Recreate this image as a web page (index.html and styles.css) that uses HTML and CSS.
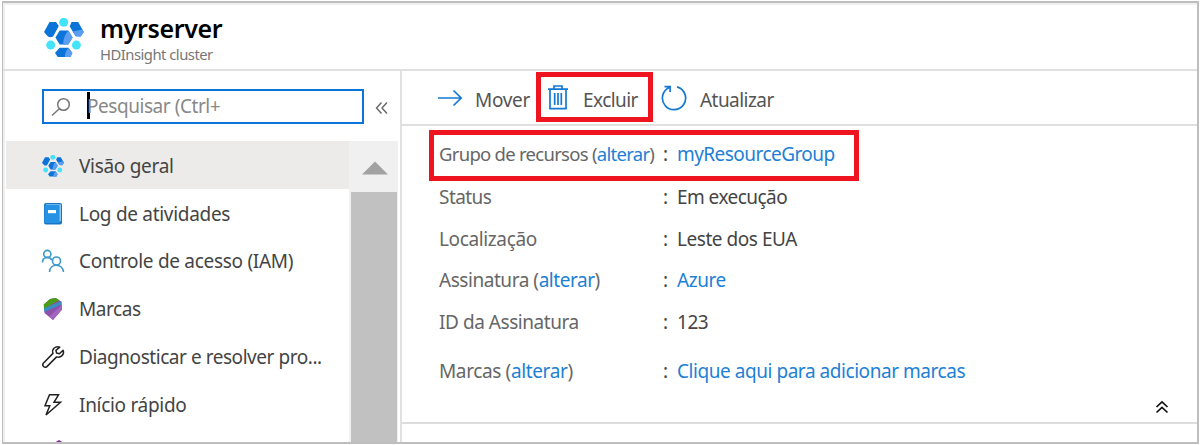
FILE: index.html
```html
<!DOCTYPE html>
<html lang="pt">
<head>
<meta charset="utf-8">
<title>myrserver</title>
<link rel="stylesheet" href="styles.css">
</head>
<body>
<svg width="0" height="0" class="defs">
  <symbol id="cluster" viewBox="0 0 40 40">
    <path fill="#0a74d8" d="M5.500 4h6.500l2.800 4-5.400 10c-1.300 1.500-4 1.400-5.500.5L0 14zM27.500 4h6.700L39.800 14l-3.100 4.500-5-.2-6-9.800zM15.700 12.500h8.600l4.300 7-4.300 7h-8.600l-4.300-7zM15.500 29.700h9l3.900 5.400-2 3.900H13.800l-2.800-3.900z"/>
    <path fill="#5c9df2" d="M28.500 13.500L38.500 11.500 39.800 14l-3.100 4.500-5-.2zM24.300 12.700L28.600 19.500 24.300 26.500h-5c0-5 1-9.500 5-13.800zM24.500 29.700l3.900 5.400-2 3.900h-5.500c0-3.500 1-6.500 3.600-9.300z"/>
    <circle cx="19.700" cy="4.300" r="4.500" fill="#45e3fb"/><circle cx="6.700" cy="27.100" r="4.500" fill="#45e3fb"/><circle cx="32.400" cy="27.100" r="4.500" fill="#45e3fb"/>
  </symbol>
</svg>
<div class="window">
  <header class="header">
    <svg class="logo" viewBox="0 0 40 40"><use href="#cluster"/></svg>
    <div><h1 class="title">myrserver</h1><p class="subtitle">HDInsight cluster</p></div>
  </header>
  <div class="body">
    <aside class="sidebar">
      <div class="search-row">
        <div class="search">
          <svg width="20" height="20" viewBox="0 0 20 20" fill="none" stroke="#777" stroke-width="1.500"><circle cx="12.500" cy="7.500" r="5.800"/><path d="M8.300 11.700L1 18.500"/></svg>
          <span class="caret"></span><span class="placeholder">Pesquisar (Ctrl+</span>
        </div>
        <svg class="collapse" width="14" height="14" viewBox="0 0 14 14" fill="none" stroke="#666" stroke-width="1.400"><path d="M6.500 1.500L1.500 7l5 5.500M12 1.500L7 7l5 5.500"/></svg>
      </div>
      <div class="menu">
        <nav class="nav">
          <a class="item active"><svg class="icon" viewBox="0 0 40 40"><use href="#cluster"/></svg><span class="n1">Visão geral</span></a>
          <a class="item"><svg class="icon" viewBox="0 0 22 22"><rect x="2" y="0" width="18" height="21.500" rx="2" fill="#1a76c2"/><path d="M4 1.200h15v17H3z" fill="#8dcaf3"/><path d="M4 2h13.500v18H4a1.500 1.500 0 0 1-1.500-1.500V3z" fill="#2592e4"/><rect x="6" y="7" width="8" height="3.200" fill="#fff"/></svg><span class="n2">Log de atividades</span></a>
          <a class="item"><svg class="icon" viewBox="0 0 22 22" fill="none" stroke="#3999ca" stroke-width="1.600"><circle cx="5.300" cy="4" r="3.600"/><circle cx="14.500" cy="11" r="4"/><path d="M.5 12.500c0-6 7-6.500 9.300-2.500M7.500 22c.5-9 13-9 14 0"/></svg><span class="n3">Controle de acesso (IAM)</span></a>
          <a class="item"><svg class="icon" viewBox="0 0 22 22"><path d="M1.800 6.500L8 1l5-1 6.500 3.500.5 8L11 22l-8.500-7z" fill="#8d50ab"/><path d="M2 10L19 3.500l.3 3L2.300 14z" fill="#398fc0"/><path d="M1.800 6.500L8 1l6-1 3.500 2.300L2 10.500z" fill="#4b9c16"/><path d="M7 18.500L19.700 7.500l.3 4L11 22z" fill="#a365bd"/></svg><span class="n4">Marcas</span></a>
          <a class="item"><svg class="icon" viewBox="0 0 22 22" fill="none" stroke="#222" stroke-width="1.500" stroke-linejoin="round"><path d="M17.800 1.200c-4.300-1.700-8.300 1.800-6.800 6.200L1.300 17.200c-1.800 2.500 1.300 5.200 3.600 3.400l9.700-9.700c4.200 1.400 8.200-2.500 6.500-6.700l-3.700 3.600-2.800-.7-.7-2.800z"/></svg><span class="n5">Diagnosticar e resolver pro...</span></a>
          <a class="item"><svg class="icon" viewBox="0 0 22 22" fill="none" stroke="#222" stroke-width="1.500"><path d="M7.500.8h9l-4.500 7.500h6.500L4 21l3.800-9.200H3z"/></svg><span class="n6">Início rápido</span></a>
          <a class="item last"><svg width="22" height="22" viewBox="0 0 22 22"><path d="M11 0l8 5v10l-8 5-8-5V5z" fill="#7b2b9b"/></svg></a>
        </nav>
        <div class="scrollbar"><div class="up"><svg width="26" height="14" viewBox="0 0 26 14"><path d="M0 13.500L13 .5l13 13z" fill="#a2a2a2"/></svg></div><div class="thumb"></div></div>
      </div>
    </aside>
    <main class="main">
      <div class="toolbar">
        <div class="tool move"><svg width="25" height="20" viewBox="0 0 25 20" fill="none" stroke="#1479d3" stroke-width="1.700"><path d="M0 10h23M15.500 2.500L23.200 10l-7.700 7.500"/></svg><span class="b1">Mover</span></div>
        <div class="tool delete"><svg width="20" height="25" viewBox="0 0 20 25" fill="none" stroke="#1479d3" stroke-width="1.700"><path d="M0 4.200h20M6 4V1h8v3M2 4.500v19.200h16V4.500M6.700 8v12M10 8v12M13.300 8v12"/></svg><span class="b2">Excluir</span></div>
        <div class="tool refresh"><svg width="26" height="26" viewBox="0 0 26 26" fill="none" stroke="#1479d3" stroke-width="1.700"><path d="M8.300 2.500A11.600 11.600 0 1 0 16 1.900M3.500 1.600h5.600v5.500"/></svg><span class="b3">Atualizar</span></div>
      </div>
      <div class="details">
        <div class="row group"><span class="label"><span class="l1">Grupo de recursos (<a>alterar</a>)</span></span><i>:</i><a class="v1">myResourceGroup</a></div>
        <div class="row"><span class="label"><span class="l2">Status</span></span><i>:</i><span class="v2">Em execução</span></div>
        <div class="row"><span class="label"><span class="l3">Localização</span></span><i>:</i><span class="v3">Leste dos EUA</span></div>
        <div class="row"><span class="label"><span class="l4">Assinatura (<a>alterar</a>)</span></span><i>:</i><a class="v4">Azure</a></div>
        <div class="row"><span class="label"><span class="l5">ID da Assinatura</span></span><i>:</i><span class="v5">123</span></div>
        <div class="row tags"><span class="label"><span class="l6">Marcas (<a>alterar</a>)</span></span><i>:</i><a class="v6">Clique aqui para adicionar marcas</a></div>
        <div class="fold"><svg width="14" height="14" viewBox="0 0 14 14" fill="none" stroke="#111" stroke-width="1.700"><path d="M1.500 7L7 1.800 12.500 7M1.500 12.500L7 7.300l5.500 5.200"/></svg></div>
      </div>
    </main>
  </div>
</div>
</body>
</html>
```
FILE: styles.css
```css
* { box-sizing: border-box; }
body { margin: 0; height: 445px; padding: 1px 1px 1px 2px; overflow: hidden; background: #fff; font: 19px/24px "Noto Sans", "Open Sans", sans-serif; color: #444; }
.defs { position: absolute; }
.window { height: 443px; border: 2px solid #bebebe; border-left-width: 1px; display: flex; flex-direction: column; overflow: hidden; box-shadow: inset 2px 2px #f0f0f0; }
.header { height: 68px; flex: none; border-bottom: 2px solid #e0e0e0; display: flex; gap: 16px; padding: 15px 0 0 41px; }
.logo { width: 40px; height: 40px; flex: none; }
.title { margin: -3px 0 0; font-size: 25px; line-height: 26px; font-weight: 600; color: #000; letter-spacing: -.35px; }
.subtitle { margin: 4px 0 0; font-size: 14.800px; line-height: 18px; color: #777; letter-spacing: -.5px; }
.title, .subtitle, .item span, .placeholder, .tool span, .label span, .row > a, .row > span { white-space: nowrap; }
.body { flex: 1; min-height: 0; display: flex; }
.sidebar { width: 399px; flex: none; border-right: 2px solid #e0e0e0; display: flex; flex-direction: column; padding-left: 3px; }
.search-row { height: 70px; flex: none; padding: 18px 0 0 36px; display: flex; gap: 11px; }
.search { width: 322px; height: 35px; border: 2px solid #0a74d8; display: flex; align-items: center; padding-left: 7px; }
.caret { width: 3px; height: 27px; margin-left: 16px; margin-top: -2px; background: #000; }
.placeholder { color: #888; margin-left: -3px; margin-top: -2px; letter-spacing: -.45px; }
.collapse { margin-top: 12px; }
.menu { display: flex; flex: 1; min-height: 0; overflow: hidden; }
.nav { width: 343px; flex: none; }
.item { display: flex; height: 47.800px; align-items: center; padding: 2px 0 0 36px; gap: 15px; }
.active { background: #edebe9; }
.icon { width: 22px; height: 22px; flex: none; overflow: visible; }
.last { padding: 12px 0 0 42px; align-items: flex-start; }
.scrollbar { width: 49px; background: #f0f0f0; padding: 0 1px 0 2px; }
.up { height: 51px; padding: 20px 0 0 11px; }
.up svg { display: block; }
.thumb { height: 260px; background: #c1c1c1; }
.main { flex: 1; display: flex; flex-direction: column; min-width: 0; }
.toolbar { height: 55px; flex: none; border-bottom: 2px solid #e0e0e0; display: flex; align-items: flex-start; padding: 0 0 0 36px; }
.tool { height: 50px; display: flex; align-items: center; color: #555; margin-top: 1px; }
.tool svg { flex: none; }
.move { width: 98px; gap: 12px; padding-top: 5px; }
.delete { width: 117px; border: 5px solid #ee1420; padding: 4px 0 0 7px; gap: 15px; }
.delete span, .refresh span { margin-top: 2px; }
.move svg, .delete svg, .refresh svg { margin-top: -3px; }
.refresh { padding: 4px 0 0 8px; gap: 13px; }
.details { flex: 1; padding: 4px 0 0 27px; }
.row { display: flex; align-items: center; height: 41.700px; padding: 0 0 0 10px; }
.row i { width: 14px; font-style: normal; }
.group { width: 430px; height: 51px; border: 5px solid #ee1420; padding: 0 0 3px 5px; margin-bottom: -5px; position: relative; z-index: 1; }
.label { width: 224px; color: #666; }
.tags { height: 56px; }
a { color: #1d80d5; }
.item, .item span { color: #444; }
.fold { display: flex; height: 25px; padding: 1px 28px 0 0; justify-content: flex-end; border-bottom: 2px solid #ddd; margin-left: -27px; }
.n1, .n2, .n3, .n6, .b1 { letter-spacing: -.3px; }
.n4, .n5 { letter-spacing: -.45px; }
.b2, .b3, .l2, .v2, .v1 { letter-spacing: -.55px; }
.l1 { font-size: 18.500px; letter-spacing: -.72px; }
.l3, .l6 { letter-spacing: -.37px; }
.l4, .l5, .v3, .v4, .v5, .v6 { letter-spacing: -.45px; }
```
